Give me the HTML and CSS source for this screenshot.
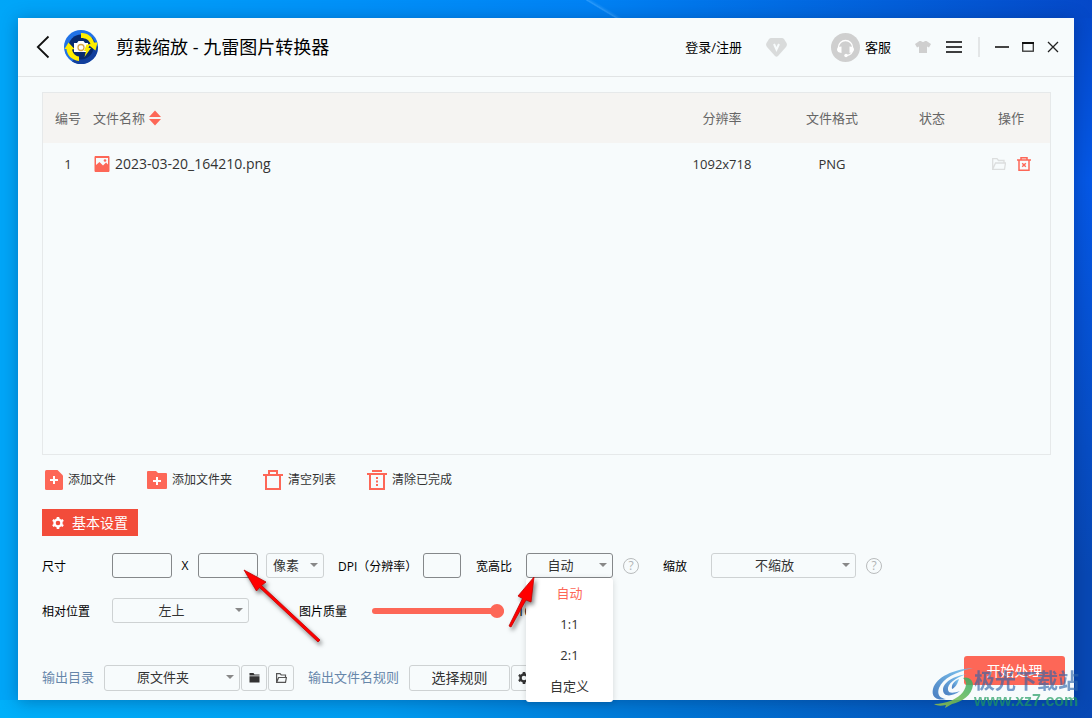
FILE: index.html
```html
<!DOCTYPE html>
<html lang="zh-CN">
<head>
<meta charset="utf-8">
<meta name="viewport" content="width=device-width, initial-scale=1">
<title>剪裁缩放 - 九雷图片转换器</title>
<link rel="stylesheet" href="styles.css">
</head>
<body>
<div class="window">
  <header class="titlebar">
    <button class="icon-btn back" aria-label="返回"><svg width="14" height="24" viewBox="0 0 14 24"><path d="M12.500 1.500L1.800 12L12.500 22.500" fill="none" stroke="#111" stroke-width="1.800"/></svg></button>
    <svg class="logo" width="34" height="34" viewBox="0 0 34 34" aria-hidden="true">
      <circle cx="17" cy="17" r="17" fill="#2172e6"/>
      <path d="M34 17A17 17 0 0 1 8 31.500L28 7Z" fill="#123f9c"/>
      <circle cx="17" cy="17" r="12.500" fill="#082a6e"/>
      <path d="M17 3C23 2.500 28.500 6.500 30 12.500L33.500 12.500L31.500 20.500L24 14.500L26.500 14C25 10 22 8 17 8Z" fill="#ffee00"/>
      <path d="M15 31C7.500 30 3 25 2.500 19L0.500 19L4.500 12.500L10.500 19L8 19.500C9 23.500 11 26 15 26.500Z" fill="#ffee00"/>
      <path d="M10 13H13L14.500 11H19.500L21 13H24V22H10Z" fill="#fff"/>
      <circle cx="17" cy="17.500" r="3" fill="#fff" stroke="#d7a64c" stroke-width="1.300"/>
      <path d="M22.500 14.500H26L24.500 18H27L20.500 27L22 21H20Z" fill="#ffee00"/>
    </svg>
    <h1 class="title">剪裁缩放 - 九雷图片转换器</h1>
    <div class="title-tools">
      <a class="title-link" href="#">登录/注册</a>
      <svg class="vip" width="21" height="19" viewBox="0 0 21 19" aria-hidden="true"><path d="M5 0H16Q17 0 18 1L20.500 5Q21.500 7 20 9L12 18Q10.500 19.500 9 18L1 9Q-.5 7 .5 5L3 1Q4 0 5 0Z" fill="#d9dbdb"/><path d="M8 6L10.500 11.500L13 6" fill="none" stroke="#f7fbfc" stroke-width="2"/></svg>
      <a class="title-link service" href="#"><svg width="29" height="29" viewBox="0 0 29 29" aria-hidden="true"><circle cx="14.500" cy="14.500" r="14.500" fill="#cfcfcf"/><path d="M7.500 15V14A7 6.500 0 0 1 21.500 14V17Q21.500 21.500 16 22.500" fill="none" stroke="#fff" stroke-width="1.300"/><path d="M10.500 13.500V20Q6 19.500 6 16.500T10.500 13.500ZM18.500 13.500V20Q23 19.500 23 16.500T18.500 13.500Z" fill="#fff"/><circle cx="15" cy="22.500" r="1.700" fill="#fff"/></svg>客服</a>
      <button class="icon-btn shirt" aria-label="换肤"><svg width="16" height="12" viewBox="0 0 16 12"><path d="M4.500 0H6Q8 2 10 0H11.500L16 3L14 6.500L12 5.500V12H4V5.500L2 6.500L0 3Z" fill="#cfcfcf"/></svg></button>
      <button class="icon-btn menu-btn" aria-label="菜单"><svg width="16" height="12" viewBox="0 0 16 12"><path d="M0 1H16M0 6H16M0 11H16" stroke="#000" stroke-width="1.600"/></svg></button>
      <span class="divider"></span>
      <button class="icon-btn" aria-label="最小化"><svg width="14" height="12" viewBox="0 0 14 12"><path d="M0 6H14" stroke="#444" stroke-width="2"/></svg></button>
      <button class="icon-btn" aria-label="最大化"><svg width="12" height="10" viewBox="0 0 12 10"><rect x=".7" y="1" width="10.600" height="8.200" fill="none" stroke="#333" stroke-width="1.300"/><path d="M0 1H12" stroke="#111" stroke-width="2"/></svg></button>
      <button class="icon-btn" aria-label="关闭"><svg width="12" height="12" viewBox="0 0 12 12"><path d="M1 1L11 11M11 1L1 11" stroke="#222" stroke-width="1.300"/></svg></button>
    </div>
  </header>

  <main class="content">
    <div class="list">
      <table class="files">
        <thead>
          <tr>
            <th class="col-num">编号</th>
            <th class="col-name"><span class="inline">文件名称<svg width="12" height="16" viewBox="0 0 12 16" aria-hidden="true"><path d="M0 7L6 .5L12 7ZM0 9L6 15.500L12 9Z" fill="#fd6757"/></svg></span></th>
            <th class="col-res">分辨率</th>
            <th class="col-std">文件格式</th>
            <th class="col-std">状态</th>
            <th class="col-ops">操作</th>
          </tr>
        </thead>
        <tbody>
          <tr>
            <td>1</td>
            <td class="col-name"><span class="inline file"><svg width="16" height="16" viewBox="0 0 16 16" aria-hidden="true"><path d="M1 .5H15V15.500H1Z" fill="#fd6757" stroke="#fd6757" stroke-linejoin="round"/><path d="M2 2H14V8.500L12 6.500L9 9.500L5.500 6L2 9Z" fill="#f7fbfc"/><circle cx="11" cy="4.500" r="1.300" fill="#fd6757"/></svg>2023-03-20_164210.png</span></td>
            <td>1092x718</td>
            <td>PNG</td>
            <td></td>
            <td class="col-ops"><span class="ops">
              <button class="icon-btn" aria-label="打开文件夹"><svg width="14" height="12" viewBox="0 0 14 12"><path d="M.7 11.300V.7H5L6.500 2.500H12V5M.7 11.300L3.500 5H13.500L12.500 11.300Z" fill="none" stroke="#dcdede" stroke-width="1.300"/></svg></button>
              <button class="icon-btn" aria-label="删除"><svg width="14" height="14" viewBox="0 0 14 14"><path d="M0 3H14M4 3V.8H10V3M2 3V13.200H12V3" fill="none" stroke="#fd6757" stroke-width="1.500"/><path d="M5.200 6.200L8.800 9.800M8.800 6.200L5.200 9.800" stroke="#fd6757" stroke-width="1.400"/></svg></button>
            </span></td>
          </tr>
        </tbody>
      </table>
    </div>

    <div class="toolbar">
      <button class="tool"><svg width="18" height="20" viewBox="0 0 18 20"><path d="M1.500 0H12.500L18 5.500V18.500Q18 20 16.500 20H1.500Q0 20 0 18.500V1.500Q0 0 1.500 0Z" fill="#fd6757"/><path d="M5 10H13M9 6V14" stroke="#fff" stroke-width="2"/></svg>添加文件</button>
      <button class="tool"><svg width="20" height="20" viewBox="0 0 20 20"><path d="M1 1H9L11 3H19Q20 3 20 4V18Q20 19 19 19H1Q0 19 0 18V2Q0 1 1 1Z" fill="#fd6757"/><path d="M6 11H14M10 7V15" stroke="#fff" stroke-width="2"/></svg>添加文件夹</button>
      <button class="tool"><svg width="20" height="20" viewBox="0 0 20 20"><path d="M0 5H20M6 5V1H14V5M3 5V19H17V5" fill="none" stroke="#fd6757" stroke-width="2"/></svg>清空列表</button>
      <button class="tool"><svg width="20" height="20" viewBox="0 0 20 20"><path d="M0 4H20M5 1H15M3 4V19H17V4" fill="none" stroke="#fd6757" stroke-width="2"/><path d="M10 7V16" stroke="#fd6757" stroke-width="2" stroke-dasharray="2 1.500"/></svg>清除已完成</button>
    </div>

    <button class="basic"><svg width="12" height="12" viewBox="0 0 12 12"><circle cx="6" cy="6" r="3.500" fill="none" stroke="#fff" stroke-width="2.400"/><path d="M6 0V2M6 10V12M.8 3L2.500 4M9.500 8L11.200 9M.8 9L2.500 8M9.500 4L11.200 3" stroke="#fff" stroke-width="2.600"/></svg>基本设置</button>

    <div class="row">
      <label class="lead" for="w">尺寸</label>
      <input class="box size" id="w" type="text" aria-label="宽度">
      <span class="times">X</span>
      <input class="box size" type="text" aria-label="高度">
      <span class="pick unit"><select aria-label="单位"><option>像素</option></select></span>
      <label class="dpi-label" for="dpi">DPI（分辨率）</label>
      <input class="box dpi" id="dpi" type="text">
      <label class="ratio-label" for="ratio">宽高比</label>
      <span class="pick ratio">
        <select id="ratio"><option>自动</option><option>1:1</option><option>2:1</option><option>自定义</option></select>
        <span class="menu" role="listbox" aria-label="宽高比">
          <span class="item chosen" role="option" aria-selected="true">自动</span>
          <span class="item" role="option">1:1</span>
          <span class="item" role="option">2:1</span>
          <span class="item" role="option">自定义</span>
        </span>
      </span>
      <button class="help" aria-label="宽高比说明">?</button>
      <label class="scale-label" for="scale">缩放</label>
      <span class="pick scale"><select id="scale"><option>不缩放</option></select></span>
      <button class="help" aria-label="缩放说明">?</button>
    </div>

    <div class="row second">
      <label class="lead" for="pos">相对位置</label>
      <span class="pick pos"><select id="pos"><option>左上</option></select></span>
      <label class="quality-label" for="quality">图片质量</label>
      <input class="slider" id="quality" type="range" min="0" max="100" value="100">
      <output class="value" for="quality">100</output>
    </div>
  </main>

  <footer class="footer">
    <div class="outputs">
      <label class="out-label dir-label" for="dir">输出目录</label>
      <span class="pick dir"><select id="dir"><option>原文件夹</option></select></span>
      <button class="square" aria-label="选择文件夹"><svg width="11" height="10" viewBox="0 0 11 10"><path d="M.5 0H4.500L5.500 1.500H10.500V2.500H.5ZM.5 3.300H10.500V9.500H.5Z" fill="#333"/></svg></button>
      <button class="square" aria-label="打开文件夹"><svg width="11" height="10" viewBox="0 0 11 10"><path d="M.6 9.400V.6H4L5.200 2H9.500V4M.6 9.400L2.600 4.500H10.400L9.500 9.400Z" fill="none" stroke="#555" stroke-width="1.200"/></svg></button>
      <span class="out-label rule-label">输出文件名规则</span>
      <button class="rule">选择规则</button>
      <button class="square" aria-label="规则设置"><svg width="12" height="12" viewBox="0 0 12 12"><circle cx="6" cy="6" r="3.500" fill="none" stroke="#333" stroke-width="2.400"/><path d="M6 0V2M6 10V12M.8 3L2.500 4M9.500 8L11.200 9M.8 9L2.500 8M9.500 4L11.200 3" stroke="#333" stroke-width="2.600"/></svg></button>
    </div>
    <button class="start">开始处理</button>
  </footer>

  <svg class="pointer long" width="84" height="82" viewBox="0 0 84 82" aria-hidden="true"><path d="M1 1L23 13L18.500 16.500L77 71L75 73L16.500 18.500L13.500 22Z" fill="#f00" stroke="#c00000" stroke-width=".8"/></svg>
  <svg class="pointer short" width="36" height="60" viewBox="0 0 36 60" aria-hidden="true"><path d="M27 1L24 26L19 24L4 51L2 50L15.500 22.500L11 20Z" fill="#f00" stroke="#c00000" stroke-width=".8"/></svg>
</div>

<div class="watermark">
  <svg width="42" height="40" viewBox="0 0 42 40" aria-hidden="true">
    <defs>
      <linearGradient id="sky" x1="0" y1="1" x2="1" y2="0"><stop offset="0" stop-color="#2c68b6"/><stop offset="1" stop-color="#6fc4f2"/></linearGradient>
      <linearGradient id="leaf" x1="0" y1="1" x2="1" y2="0"><stop offset="0" stop-color="#a0c440"/><stop offset="1" stop-color="#2fae6a"/></linearGradient>
    </defs>
    <path d="M41 0C22 1 4 9 1 21C-1 29 5 33 14 31C7 30 5 26 7 20C11 10 24 4 41 0Z" fill="url(#sky)"/>
    <path d="M35 6C22 8 11 14 11 22C11 29 20 29 28 23C22 25 17 26 16 22C15 16 23 10 35 6Z" fill="url(#sky)"/>
    <path d="M27 11C22 13 19 17 20 21C23 20 26 15 27 11Z" fill="url(#sky)"/>
    <path d="M31 10C35 8 41 11 41 17C40 27 30 34 20 36L13 40L14 37C9 38 5 38 2 36C14 36 26 31 31 24C35 18 35 13 31 10Z" fill="url(#leaf)"/>
  </svg>
  <div class="mark-text"><span class="mark-name">极光下载站</span><span class="mark-url">www.xz7.com</span></div>
</div>
</body>
</html>
```

FILE: styles.css
```css
* { box-sizing: border-box; }

html { height: 100%; }

body {
  display: flex;
  min-height: 100%;
  margin: 0;
  padding: 18px;
  position: relative;
  overflow: hidden;
  font: 12px/16px "Open Sans", "Noto Sans CJK SC", sans-serif;
  color: #111;
  background:
    linear-gradient(31deg, transparent 47%, rgba(60, 165, 255, 0.7) 49%, rgba(60, 165, 255, 0.3) 51%, transparent 54%) 57% 0 / 64px 36px no-repeat,
    linear-gradient(to right, #00a6f8, #0090f8 33%, #0082f4 54%, #0548c8) top / 100% 18px no-repeat,
    linear-gradient(to right, #00b0fa, #009cf0 35%, #007ad8 58%, #0848b4) bottom / 100% 18px no-repeat,
    linear-gradient(to bottom, #0548c8, #0558e6 25%, #0848b4 80%) right / 50% 100% no-repeat,
    #00a6f8;
}

button, input, select { font: inherit; color: inherit; margin: 0; }
button { padding: 0; border: 0; background: none; }
svg { display: block; flex: none; }
a { color: inherit; text-decoration: none; }

.window {
  display: flex;
  flex: 1;
  flex-direction: column;
  position: relative;
  background: #f7fbfc;
  box-shadow: 0 2px 16px rgba(0, 30, 80, 0.35);
}

.titlebar {
  display: flex;
  align-items: center;
  height: 59px;
  padding: 0 15px 0 18px;
  border-bottom: 1px solid #e1e4e5;
}
.icon-btn { display: flex; flex: none; align-items: center; justify-content: center; }
.logo { margin-left: 14px; }
.title { margin: 0 0 0 18px; font-size: 18px; line-height: 24px; font-weight: 400; color: #000; }
.title-tools { display: flex; align-items: center; gap: 13px; margin-left: auto; }
.title-link { font-size: 13px; line-height: 20px; color: #000; white-space: nowrap; }
.vip { margin: 0 31px 0 11px; }
.service { display: flex; align-items: center; gap: 5px; }
.shirt { margin-left: 11px; }
.menu-btn { margin-left: 2px; }
.divider { width: 2px; height: 20px; margin: 0 2px 0 3px; background: #e3e6e7; }

.content { display: flex; flex: 1; flex-direction: column; padding: 15px 23px 0 24px; }

.list { flex: 1; min-height: 180px; border: 1px solid #e6e9ea; }
.files { width: 100%; table-layout: fixed; border-collapse: collapse; font-size: 13px; line-height: 20px; color: #333; }
.files th { height: 50px; padding: 0; font-weight: 400; color: #666; background: #f5f4f2; }
.files td { height: 42px; padding: 0; text-align: center; }
.files .col-num { width: 50px; }
.files .col-name { text-align: left; }
.files .col-res { width: 120px; }
.files .col-std { width: 100px; }
.files .col-ops { width: 68px; padding-right: 10px; }
.inline { display: flex; align-items: center; gap: 4px; }
.file { padding-left: 1px; gap: 5px; font-size: 14px; }
.ops { display: flex; align-items: center; justify-content: center; gap: 11px; }

.toolbar { display: flex; gap: 31px; padding: 15px 3px 0; }
.tool { display: flex; align-items: center; gap: 5px; line-height: 20px; color: #333; white-space: nowrap; }

.basic {
  display: flex;
  align-self: flex-start;
  align-items: center;
  gap: 8px;
  height: 27px;
  margin-top: 19px;
  padding: 0 10px;
  font-size: 14px;
  color: #fff;
  background: #f24c3a;
}

.row { display: flex; align-items: center; height: 25px; margin-top: 17px; white-space: nowrap; color: #000; }
.row > * { flex: none; }
.row > label { padding-top: 2px; }
.second { margin: 20px 0 33px; }
.lead { width: 70px; }

.box { height: 25px; padding: 0 4px; border: 1px solid #85888a; border-radius: 3px; background: transparent; }
.size { width: 60px; }
.times { width: 26px; text-align: center; }
.dpi { width: 38px; }

.pick { position: relative; height: 25px; font-size: 13px; color: #333; }
.pick select {
  display: block;
  width: 100%;
  height: 100%;
  padding: 0 20px 2px 2px;
  border: 1px solid #ced2d3;
  border-radius: 3px;
  background: transparent;
  appearance: none;
  text-align: center;
  text-align-last: center;
}
.pick::after {
  content: "";
  position: absolute;
  top: 10px;
  right: 6px;
  border: 4px solid transparent;
  border-top: 4px solid #888;
  border-bottom: 0;
  pointer-events: none;
}
.unit { width: 58px; margin-left: 8px; }
.ratio { width: 87px; }
.pick.ratio select { border-color: #85888a; }
.scale { width: 145px; }
.pos { width: 137px; }

.dpi-label { width: 85px; margin-left: 14px; }
.ratio-label { width: 50px; margin-left: 15px; }
.scale-label { width: 48px; margin-left: 24px; }
.quality-label { width: 73px; margin-left: 50px; }

.help {
  width: 16px;
  height: 16px;
  margin-left: 10px;
  border: 1px solid #b9bcbd;
  border-radius: 50%;
  font-size: 12px;
  line-height: 14px;
  color: #b0b3b4;
}

.menu {
  position: absolute;
  z-index: 2;
  top: 100%;
  left: 0;
  width: 100%;
  background: #fff;
  border-radius: 3px;
  box-shadow: 0 1px 6px rgba(0, 0, 0, 0.15);
}
.item { display: block; line-height: 31px; text-align: center; }
.chosen { color: #fd6757; }

.slider { width: 132px; height: 14px; appearance: none; background: transparent; }
.slider::-webkit-slider-runnable-track { height: 6px; border-radius: 3px; background: #fd6757; }
.slider::-webkit-slider-thumb { width: 14px; height: 14px; margin-top: -4px; appearance: none; border-radius: 50%; background: #fd6757; }
.value { margin-left: 13px; font-size: 13px; }

.footer { display: flex; align-items: flex-start; justify-content: space-between; padding: 0 9px 9px 24px; }
.outputs { display: flex; align-items: center; padding-top: 9px; white-space: nowrap; }
.out-label { padding-bottom: 3px; font-size: 13px; color: #6686aa; }
.dir-label { width: 62px; }
.rule-label { width: 101px; margin-left: 14px; }
.dir { width: 136px; height: 26px; }
.square, .rule { height: 26px; border: 1px solid #ced2d3; border-radius: 3px; }
.square { display: flex; align-items: center; justify-content: center; width: 26px; margin-left: 1px; }
.rule { width: 101px; font-size: 14px; color: #333; }
.start { width: 101px; height: 29px; border-radius: 3px; font-size: 14px; color: #fff; background: #fd6757; }

.pointer { position: absolute; z-index: 3; filter: drop-shadow(2px 3px 2px rgba(0, 0, 0, 0.5)); pointer-events: none; }
.long { left: 225px; bottom: 49px; }
.short { left: 489px; bottom: 64px; }

.watermark {
  display: flex;
  position: absolute;
  z-index: 4;
  right: 13px;
  bottom: 9px;
  pointer-events: none;
  opacity: 0.85;
}
.mark-text { display: flex; flex-direction: column; font-weight: 700; white-space: nowrap; }
.mark-name { font-size: 21px; line-height: 25px; color: rgba(45, 100, 170, 0.75); }
.mark-url { font: 700 16px/16px "Liberation Sans", sans-serif; color: rgba(30, 155, 95, 0.8); }
```
